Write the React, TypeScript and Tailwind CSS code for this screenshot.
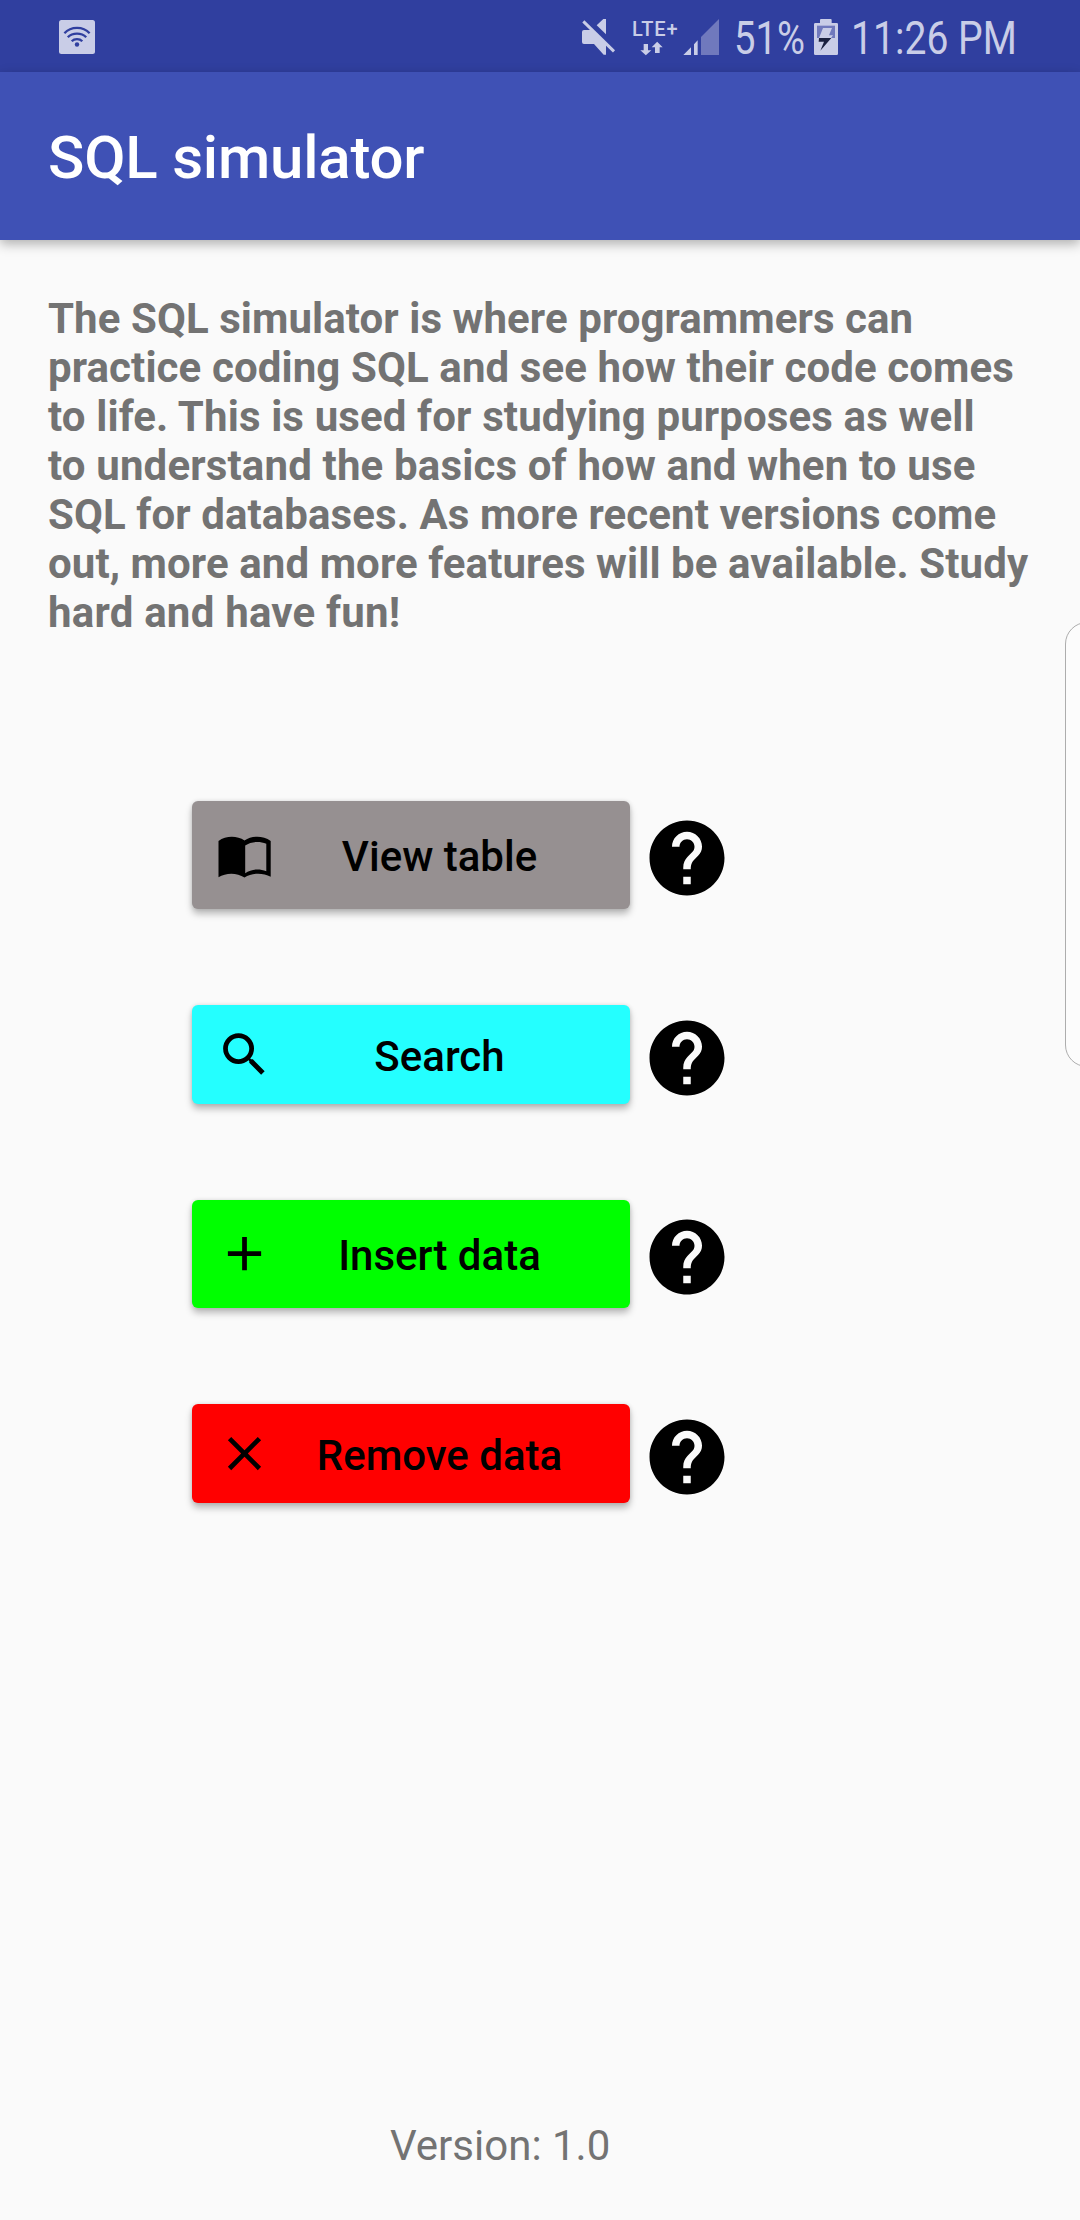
import type { ReactNode } from "react";
import { MdAdd, MdClose, MdHelp, MdSearch } from "react-icons/md";

function WifiBadge() {
  return (
    <svg viewBox="0 0 36 34" className="h-[34px] w-9">
      <rect x="0" y="0" width="36" height="34" rx="2.5" fill="#c9cde7" />
      <g fill="none" stroke="#303f9f" strokeWidth="2.3">
        <path d="M5.4 13.3C12 6.1 24 6.1 30.6 13.3" />
        <path d="M8.8 17.2C13.5 12.3 22.5 12.3 27.2 17.2" />
        <path d="M12.7 21.2C15.5 18.4 20.5 18.4 23.3 21.2" />
      </g>
      <circle cx="18" cy="24.5" r="2.2" fill="#303f9f" />
    </svg>
  );
}

function MuteIcon() {
  return (
    <svg viewBox="63 54 105 114" className="h-[38px] w-[35px]" fill="#c9cde7">
      <path d="M110 76L130 57H138V103Z" />
      <path d="M72 90H97L138 130V164H131L102 132H72Q66 132 66 126V96Q66 90 72 90Z" />
      <path d="M70 64L162 154" stroke="#c9cde7" strokeWidth="9" />
    </svg>
  );
}

function DataArrows() {
  return (
    <svg viewBox="240 123 69 45" className="h-[15px] w-[23px]" fill="#c9cde7">
      <path d="M251 132H264V151H274L257.500 166L241 151H251Z" />
      <path d="M285 159H299V142H308L291.500 125L275 142H285Z" />
    </svg>
  );
}

function SignalIcon() {
  return (
    <svg viewBox="369 54 111 114" className="h-[38px] w-[37px]">
      <path d="M370 165L393 142V165ZM402 133L413 121V165H402Z" fill="#c9cde7" />
      <path d="M423 111L477 57V165H423Z" fill="#7079bd" />
    </svg>
  );
}

function BatteryIcon() {
  return (
    <svg viewBox="42 54 72 114" className="h-[38px] w-6">
      <path d="M60 60Q60 57 63 57H92Q95 57 95 60V69H110Q114 69 114 73V161Q114 165 110 165H46Q42 165 42 161V73Q42 69 46 69H60Z" fill="#c9cde7" />
      <path d="M51 77H105V114H51Z" fill="#7079bd" />
      <path d="M69 84H96L87 106H99L93 114H57Z" fill="#c9cde7" />
      <path d="M57 114H94L61 152L72 125H56Z" fill="#1b2140" />
    </svg>
  );
}

function BookIcon() {
  return (
    <svg viewBox="216 826.500 57 57" className="size-[57px]">
      <path
        fillRule="evenodd"
        d="M218.500 840.500C226 835 237 835 244.500 840C252 835 263 835 270.700 840.500V876.300C263 872 252 872 244.500 877C237 872 226 872 218.500 876.700ZM245.200 845V872.800C251 868.600 259 867.800 266.300 870.700V843.300C259 840 251 841.200 245.200 845Z"
      />
    </svg>
  );
}

function StatusBar() {
  return (
    <div className="flex h-[72px] items-start bg-[#303f9f] pt-[18px] pl-[59px] text-[#c9cde7]">
      <div className="pt-[2px]">
        <WifiBadge />
      </div>
      <div className="ml-[486px]">
        <MuteIcon />
      </div>
      <div className="ml-4 flex w-[47px] flex-col pt-[3px]">
        <span className="text-[20px] leading-[16px] font-medium tracking-[0.9px] whitespace-nowrap">LTE+</span>
        <div className="pt-[4px] pl-[8px]">
          <DataArrows />
        </div>
      </div>
      <div className="ml-[4px]">
        <SignalIcon />
      </div>
      <div className="ml-[14px] w-[76px] text-[46px] leading-[40px]">
        <span className="inline-block origin-left scale-x-[0.83]">51%</span>
      </div>
      <div className="ml-[4px]">
        <BatteryIcon />
      </div>
      <div className="ml-[13px] w-[180px] text-[46px] leading-[40px] whitespace-nowrap">
        <span className="inline-block origin-left scale-x-[0.85]">11:26 PM</span>
      </div>
    </div>
  );
}

type ActionProps = { label: string; icon: ReactNode; box: string; text: string; help: string };

const actions: ActionProps[] = [
  { label: "View table", icon: <BookIcon />, box: "h-[108px] bg-[#969091]", text: "pt-[2px]", help: "mt-3" },
  { label: "Search", icon: <MdSearch className="size-[57px]" />, box: "h-[99px] bg-[#24ffff]", text: "pt-[4px]", help: "mt-2" },
  { label: "Insert data", icon: <MdAdd className="mb-[2px] size-[57px]" />, box: "h-[108px] bg-[#00ff00]", text: "pt-[2px]", help: "mt-3" },
  { label: "Remove data", icon: <MdClose className="size-[57px]" />, box: "h-[99px] bg-[#ff0000]", text: "pt-[4px]", help: "mt-2" },
];

function Action({ label, icon, box, text, help }: ActionProps) {
  return (
    <div className="flex items-start gap-3">
      <button
        className={`flex w-[438px] items-center rounded-[6px] px-6 text-[42px] leading-[49px] font-medium text-black shadow-[0_5px_7px_rgba(0,0,0,0.26),0_0_4px_rgba(0,0,0,0.12)] ${box}`}
      >
        {icon}
        <span className={`flex-1 text-center ${text}`}>{label}</span>
      </button>
      <MdHelp className={`size-[90px] ${help}`} />
    </div>
  );
}

const intro = [
  { line: "The SQL simulator is where programmers can", tracking: "tracking-[0.07px]" },
  { line: "practice coding SQL and see how their code comes", tracking: "tracking-[0.1px]" },
  { line: "to life. This is used for studying purposes as well", tracking: "tracking-[0.12px]" },
  { line: "to understand the basics of how and when to use", tracking: "tracking-[0.15px]" },
  { line: "SQL for databases. As more recent versions come", tracking: "tracking-[0.08px]" },
  { line: "out, more and more features will be available. Study", tracking: "tracking-[0.08px]" },
  { line: "hard and have fun!", tracking: "tracking-[0.22px]" },
];

export default function App() {
  return (
    <div className="relative flex h-[2220px] w-[1080px] flex-col overflow-hidden bg-[#fafafa] font-['Roboto',sans-serif]">
      <StatusBar />
      <header className="flex h-[168px] items-center bg-[#3f51b5] pl-12 shadow-[0_4px_11px_rgba(0,0,0,0.3)]">
        <h1 className="pt-[3px] text-[60px] leading-[70px] font-medium tracking-[-0.2px] text-white">SQL simulator</h1>
      </header>
      <p className="mt-[54px] ml-12 text-[42px] leading-[49px] font-bold whitespace-nowrap text-[#737373]">
        {intro.map(({ line, tracking }) => (
          <span key={line} className={`block ${tracking}`}>
            {line}
          </span>
        ))}
      </p>
      <main className="mt-[164px] ml-48 flex flex-col gap-24">
        {actions.map((a) => (
          <Action key={a.label} {...a} />
        ))}
      </main>
      <footer className="mt-auto mb-[50px] pl-[390px] text-[42px] leading-[49px] text-[#737373]">Version: 1.0</footer>
      <div className="absolute top-[622px] left-[1065px] h-[445px] w-[50px] rounded-[22px] border-[1.5px] border-[#adadad] bg-[#fcfcfc]" />
    </div>
  );
}
